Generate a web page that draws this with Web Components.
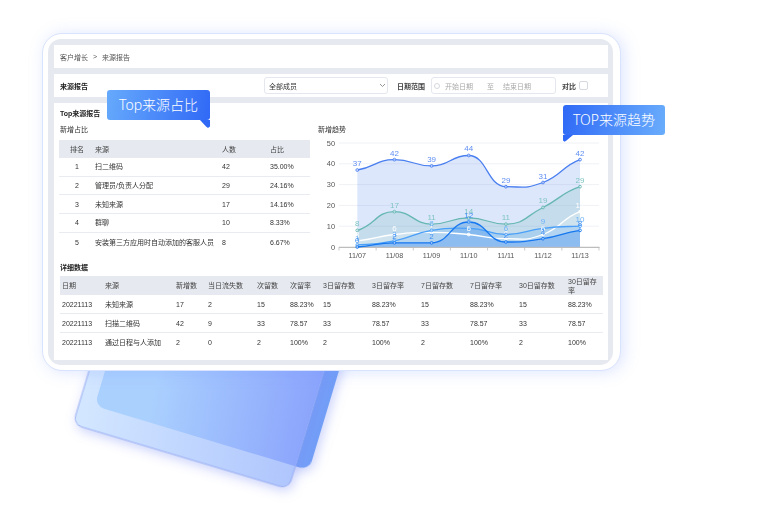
<!DOCTYPE html>
<html lang="zh">
<head>
<meta charset="utf-8">
<title>来源报告</title>
<style>
html,body{margin:0;padding:0;background:#fff}
body{font-family:"Liberation Sans","Noto Sans CJK SC",sans-serif;font-size:7px;color:#555}
</style>
</head>
<body>
<report-stage>
  <glass-backdrop slot="back"></glass-backdrop>
  <report-card>
    <report-panel style="height:23px"><bread-crumb>客户增长<span>&gt;</span>来源报告</bread-crumb></report-panel>
    <report-panel style="height:23px"><filter-bar></filter-bar></report-panel>
    <report-panel style="flex:1"><report-body></report-body></report-panel>
  </report-card>
  <call-out slot="over" tail="right" style="left:107px;top:90px;width:103px">Top来源占比</call-out>
  <call-out slot="over" tail="left" style="left:563px;top:105px;width:102px">TOP来源趋势</call-out>
</report-stage>
<script>
function shell(tag, css, html, extra){
  class E extends HTMLElement{
    connectedCallback(){
      if(this.shadowRoot) return;
      const r=this.attachShadow({mode:'open'});
      r.innerHTML='<style>'+css+'</style>'+html;
      if(extra) extra.call(this,r);
    }
  }
  customElements.define(tag,E);
}
const FONT='"Liberation Sans","Noto Sans CJK SC",sans-serif';

shell('report-stage',
 ':host{display:block;position:relative;width:760px;height:520px;overflow:hidden;box-sizing:border-box;padding:33px 0 0 42px;font-family:'+FONT+'}',
 '<slot name="back"></slot><slot></slot><slot name="over"></slot>');

shell('glass-backdrop',':host{display:block;position:absolute;left:0;top:0;width:760px;height:520px}svg{display:block}',
 `<svg width="760" height="520" viewBox="0 0 760 520">
  <defs>
   <linearGradient id="g1" gradientUnits="userSpaceOnUse" x1="80" y1="440" x2="330" y2="400"><stop offset="0" stop-color="#d2e6ff"/><stop offset="1" stop-color="#a9c0fd"/></linearGradient>
   <linearGradient id="g2" gradientUnits="userSpaceOnUse" x1="100" y1="400" x2="325" y2="375"><stop offset="0" stop-color="#aad0fe"/><stop offset="1" stop-color="#7f93fb"/></linearGradient>
   <linearGradient id="g3" gradientUnits="userSpaceOnUse" x1="330" y1="371" x2="310" y2="470"><stop offset="0" stop-color="#729ef6"/><stop offset="1" stop-color="#5b9cfb"/></linearGradient>
   <clipPath id="cp"><rect x="0" y="-220" width="225" height="220" rx="9" transform="translate(73 424.3) rotate(16.7)"/></clipPath>
   <filter id="sh" x="-20%" y="-20%" width="140%" height="140%"><feDropShadow dx="3" dy="3" stdDeviation="6" flood-color="#7d8ff5" flood-opacity=".4"/></filter>
  </defs>
  <rect x="0" y="-220" width="224" height="220" rx="10" transform="translate(94.5 406) rotate(16.7)" fill="url(#g3)" filter="url(#sh)"/>
  <rect x="0" y="-220" width="225" height="220" rx="9" transform="translate(73 424.3) rotate(16.7)" fill="url(#g1)" stroke="#93a9f0" stroke-width=".9" filter="url(#sh)"/>
  <g clip-path="url(#cp)"><rect x="0" y="-220" width="224" height="220" rx="10" transform="translate(94.5 406) rotate(16.7)" fill="url(#g2)"/></g>
 </svg>`);

shell('report-card',
 `:host{display:block;position:relative;box-sizing:border-box;width:579px;height:338px;padding:5px 7px 5px 5px;background:#fff;border:1px solid #d9e3fd;border-radius:20px;box-shadow:3px 1px 16px 0 rgba(120,150,255,.25)}
  .frame{box-sizing:border-box;height:100%;background:#e6eaf0;border-radius:13px;padding:6px 5px 5px 6px;display:flex;flex-direction:column;gap:6px;filter:blur(.2px)}`,
 '<div class="frame"><slot></slot></div>');

shell('report-panel',':host{display:block;background:#fff;min-height:0}','<slot></slot>');

shell('bread-crumb',
 ':host{display:flex;align-items:center;height:100%;padding-left:6px;color:#555;font-size:7px}::slotted(span){margin:0 5px}',
 '<slot></slot>');

shell('filter-bar',
 `:host{display:flex;align-items:center;height:100%;padding-left:6px;color:#333;font-size:7px;white-space:nowrap}
  b{font-weight:700;color:#222;width:28px}
  .sel{margin-left:176px;box-sizing:border-box;width:124px;height:17px;border:1px solid #e4e7ed;border-radius:3px;display:flex;align-items:center;justify-content:space-between;padding:0 1px 0 4px}
  .lab{margin-left:9px;width:28px;font-weight:700;color:#444}
  .date{margin-left:6px;box-sizing:border-box;width:125px;height:17px;border:1px solid #e4e7ed;border-radius:3px;display:flex;align-items:center;color:#aaa;padding-left:2px}
  .date i{display:block;box-sizing:border-box;width:6px;height:6px;border:1px solid #d5d8de;border-radius:50%;margin-right:5px}
  .date span:nth-of-type(2){margin-left:14px}.date span:nth-of-type(3){margin-left:9px}
  .cmp{margin-left:6px;font-weight:700;color:#444;width:14px}
  .chk{margin-left:3px;box-sizing:border-box;width:9px;height:9px;border:1px solid #d6d9df;border-radius:2px}
  svg{display:block}`,
 `<b>来源报告</b>
  <div class="sel"><span>全部成员</span><svg width="7" height="5" viewBox="0 0 7 5"><path d="M1 1l2.5 2.5L6 1" fill="none" stroke="#888" stroke-width=".9"/></svg></div>
  <span class="lab">日期范围</span>
  <div class="date"><i></i><span>开始日期</span><span>至</span><span>结束日期</span></div>
  <span class="cmp">对比</span><div class="chk"></div>`);

shell('data-grid',
 `:host{display:block;font-size:7px;color:#333}
  .row{display:grid;align-items:center;border-bottom:1px solid #e8ebf0}
  .row:last-child{border-bottom:0}
  .head{background:#e6eaf0;border-bottom:0;color:#444}
  .c{padding-left:var(--pad,0);line-height:9px}`,
 '<div id="r"></div>',
 function(root){
  const cols=this.getAttribute('cols'),head=+this.getAttribute('head'),rowH=+this.getAttribute('row');
  const data=JSON.parse(this.querySelector('script').textContent);
  const box=root.getElementById('r');
  const centered=(this.getAttribute('center')||'').split(',').filter(Boolean).map(Number);
  data.forEach((row,i)=>{
    const d=document.createElement('div');
    d.className='row'+(i?'':' head');
    d.style.gridTemplateColumns=cols;
    d.style.height=(i?rowH:head)+'px';
    d.style.boxSizing='border-box';
    row.forEach((t,j)=>{
      const c=document.createElement('div');
      c.className='c';c.textContent=t;
      if(centered.includes(j))c.style.textAlign='center';
      d.appendChild(c);
    });
    box.appendChild(d);
  });
 });

shell('report-body',
 `:host{display:block;box-sizing:border-box;height:100%;padding:5px 5px 0 5px;color:#333;font-size:7px}
  h3{margin:0;font-size:7px;line-height:12px;height:12px;font-weight:700;color:#222;padding-left:1px}
  .top{display:grid;grid-template-columns:251px 286px;column-gap:7px;height:142px}
  .sub{margin-top:5px;height:10px;line-height:10px;padding-left:1px;margin-bottom:5px}
  .d{margin-top:2px;margin-left:1px}`,
 `<h3>Top来源报告</h3>
  <div class="top">
   <div><div class="sub">新增占比</div>
    <data-grid cols="36px 127px 48px 40px" head="18" row="18.7" center="0"><script type="application/json">[["排名","来源","人数","占比"],["1","扫二维码","42","35.00%"],["2","管理员/负责人分配","29","24.16%"],["3","未知来源","17","14.16%"],["4","群聊","10","8.33%"],["5","安装第三方应用时自动添加的客服人员","8","6.67%"]]<\/script></data-grid>
   </div>
   <div><div class="sub" style="margin:5px 0 0">新增趋势</div><trend-chart></trend-chart></div>
  </div>
  <h3>详细数据</h3>
  <data-grid class="d" style="--pad:2px" cols="43px 71px 32px 49px 33px 33px 49px 49px 49px 49px 49px 37px" head="19" row="19"><script type="application/json">[["日期","来源","新增数","当日流失数","次留数","次留率","3日留存数","3日留存率","7日留存数","7日留存率","30日留存数","30日留存率"],["20221113","未知来源","17","2","15","88.23%","15","88.23%","15","88.23%","15","88.23%"],["20221113","扫描二维码","42","9","33","78.57","33","78.57","33","78.57","33","78.57"],["20221113","通过日程与人添加","2","0","2","100%","2","100%","2","100%","2","100%"]]<\/script></data-grid>`);

shell('trend-chart',':host{display:block}svg{display:block;overflow:visible;font-family:"Liberation Sans",sans-serif}',
 '<svg id="s" width="286" height="127" viewBox="317 135 286 127"></svg>',
 function(root){
  const X=[357.3,394.4,431.6,468.7,505.9,543,580], Y=v=>247-2.08*v;
  const series=[
   {c:'#4a7ff0',f:'rgba(74,127,240,.19)',v:[37,42,39,44,29,31,42]},
   {c:'#66b7b4',f:'rgba(99,181,176,.2)',v:[8,17,11,14,11,19,29]},
   {c:'#ffffff',f:'rgba(255,255,255,.2)',v:[3,6,7,6,4,6,17]},
   {c:'#4aa0f8',f:'rgba(74,160,248,.2)',v:[1,3,8,9,6,9,10]},
   {c:'#1677f0',f:'rgba(22,119,240,.25)',v:[0,2,2,12,2.4,4,8],l:[0,2,2,12,2,4,8]}
  ];
  function path(v){
   const p=v.map((d,i)=>[X[i],Y(d)]);
   const t=p.map((q,i)=>{
    if(i===0||i===p.length-1)return 0;
    const a=p[i][1]-p[i-1][1],b=p[i+1][1]-p[i][1];
    if(a*b<=0)return 0;
    return (a+b)/2*0.5;
   });
   let s='M'+p[0][0]+' '+p[0][1].toFixed(1);
   for(let i=0;i<p.length-1;i++){
    const dx=(p[i+1][0]-p[i][0])*.5;
    const c1y=p[i][1]+(i===0?(p[1][1]-p[0][1])*.3:t[i]);
    const c2y=p[i+1][1]-(i===p.length-2?(p[i+1][1]-p[i][1])*.3:t[i+1]);
    s+='C'+(p[i][0]+dx).toFixed(1)+' '+c1y.toFixed(1)+' '+(p[i+1][0]-dx).toFixed(1)+' '+c2y.toFixed(1)+' '+p[i+1][0]+' '+p[i+1][1].toFixed(1);
   }
   return s;
  }
  let h='';
  for(let i=0;i<=5;i++){
   const y=Y(i*10);
   if(i)h+=`<line x1="339" x2="599" y1="${y}" y2="${y}" stroke="#eff1f5" stroke-width="1"/>`;
   h+=`<text x="335" y="${y+2.5}" text-anchor="end" font-size="7.4" fill="#555">${i*10}</text>`;
  }
  series.forEach(s=>{h+=`<path d="${path(s.v)}L580 247L357.3 247Z" fill="${s.f}"/>`;});
  h+=`<line x1="339" x2="599.5" y1="247.4" y2="247.4" stroke="#bdbdbd" stroke-width="1.2"/>`;
  for(let i=0;i<8;i++){const x=339+i*37.14;h+=`<line x1="${x}" x2="${x}" y1="247" y2="250.5" stroke="#bdbdbd" stroke-width=".8"/>`;}
  ['11/07','11/08','11/09','11/10','11/11','11/12','11/13'].forEach((t,i)=>{h+=`<text x="${X[i]}" y="257.5" text-anchor="middle" font-size="7.2" fill="#555">${t}</text>`;});
  series.forEach(s=>{
   h+=`<path d="${path(s.v)}" fill="none" stroke="${s.c}" stroke-width="1.3"/>`;
   s.v.forEach((d,i)=>{h+=`<circle cx="${X[i]}" cy="${Y(d)}" r="1.4" fill="#fff" fill-opacity=".5" stroke="${s.c}" stroke-width=".9"/>`;});
  });
  series.forEach(s=>{
   const c=s.c==='#66b7b4'?'#7fc4c1':s.c==='#4a7ff0'?'#5f8ef2':s.c==='#4aa0f8'?'#6fb3f8':s.c==='#1677f0'?'#3f8ef2':'#fff';
   s.v.forEach((d,i)=>{h+=`<text x="${X[i]}" y="${Y(d)-4}" text-anchor="middle" font-size="8" fill="${c}">${(s.l||s.v)[i]}</text>`;});
  });
  root.getElementById('s').innerHTML=h;
 });

shell('call-out',
 `:host{display:block;position:absolute;z-index:3;box-sizing:border-box;height:30px;line-height:29px;text-align:center;color:#fff;font-size:14px;font-weight:300;border-radius:3px;font-family:"Noto Sans",${FONT}}
  :host([tail=right]){background:linear-gradient(100deg,#66aafc,#3069f6)}
  :host([tail=left]){background:linear-gradient(100deg,#2f69f6,#69adfc)}
  :host::after{content:"";position:absolute;top:30px;width:10px;height:8px}
  :host([tail=right])::after{right:0;background:#3069f6;clip-path:polygon(0 0,100% 0,100% 80%,80% 100%,60% 80%)}
  :host([tail=left])::after{left:0;background:#2f69f6;clip-path:polygon(0 0,100% 0,35% 70%,15% 85%,0 70%)}`,
 '<slot></slot>');
</script>
</body>
</html>
